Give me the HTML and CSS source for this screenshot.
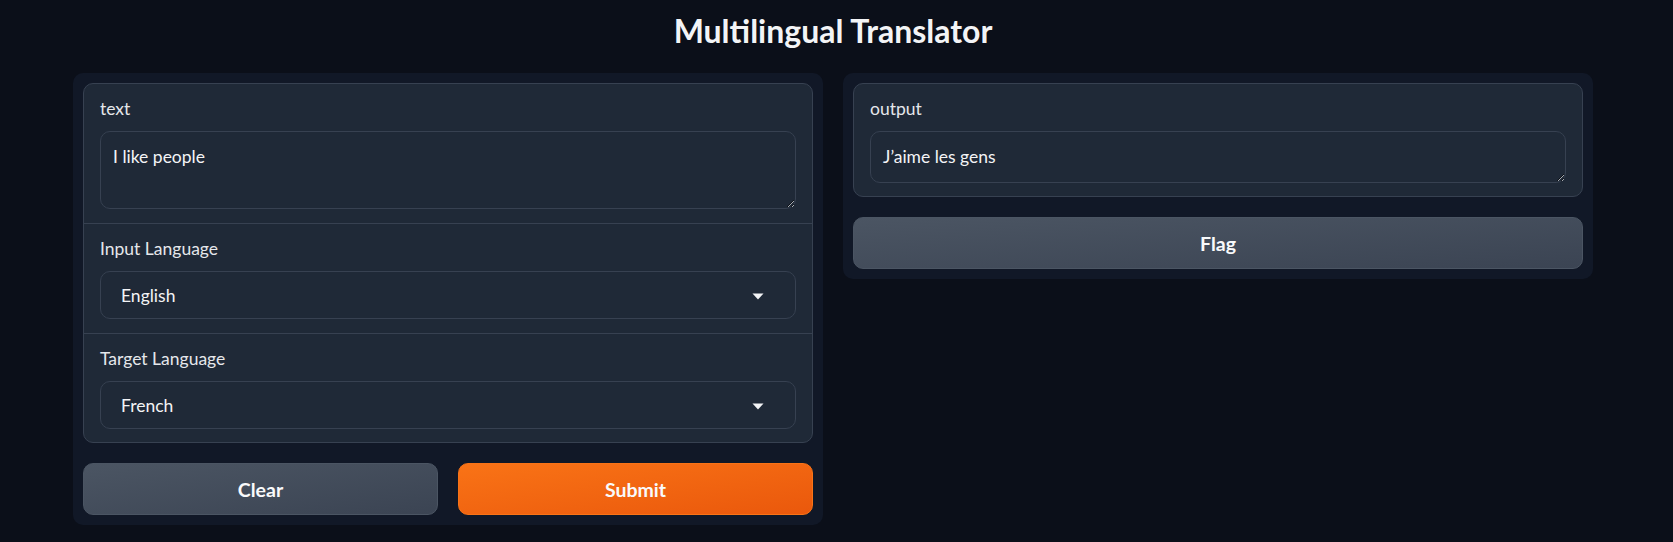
FILE: index.html
```html
<!DOCTYPE html>
<html lang="en">
<head>
<meta charset="utf-8">
<title>Multilingual Translator</title>
<link rel="stylesheet" href="styles.css">
</head>
<body>
<div class="app">
  <h1 class="title">Multilingual Translator</h1>
  <div class="row">
    <div class="panel">
      <div class="form">
        <div class="section">
          <label class="label" for="t-in">text</label>
          <textarea id="t-in" class="textbox tall">I like people</textarea>
        </div>
        <div class="section">
          <span class="label">Input Language</span>
          <div class="dropdown">
            <span class="dd-value">English</span>
            <svg class="dd-arrow" width="12" height="7" viewBox="0 0 12 7"><path d="M0.5 0.5 L11.5 0.5 L6 6.5 Z" fill="#f3f4f6"/></svg>
          </div>
        </div>
        <div class="section last">
          <span class="label">Target Language</span>
          <div class="dropdown">
            <span class="dd-value">French</span>
            <svg class="dd-arrow" width="12" height="7" viewBox="0 0 12 7"><path d="M0.5 0.5 L11.5 0.5 L6 6.5 Z" fill="#f3f4f6"/></svg>
          </div>
        </div>
      </div>
      <div class="buttons">
        <button class="btn secondary">Clear</button>
        <button class="btn primary">Submit</button>
      </div>
    </div>
    <div class="panel">
      <div class="form">
        <div class="section last">
          <label class="label" for="t-out">output</label>
          <textarea id="t-out" class="textbox short">J’aime les gens</textarea>
        </div>
      </div>
      <button class="btn secondary">Flag</button>
    </div>
  </div>
</div>
</body>
</html>
```
FILE: styles.css
```css
* { box-sizing: border-box; }
html, body { margin: 0; padding: 0; }
body {
  background: #0b0f19;
  font-family: Lato, "Open Sans", "Noto Sans", sans-serif;
  color: #f3f4f6;
}
.app {
  width: 1520px;
  margin-left: 73px;
}
.title {
  margin: 0;
  padding-top: 13px;
  height: 73px;
  font-size: 32px;
  line-height: 36px;
  font-weight: 700;
  text-align: center;
  color: #f3f4f6;
}
.row {
  display: flex;
  gap: 20px;
  align-items: flex-start;
}
.panel {
  flex: 1;
  background: #111827;
  border-radius: 10px;
  padding: 10px;
  display: flex;
  flex-direction: column;
  gap: 20px;
}
.form {
  background: #1f2937;
  border: 1px solid #374151;
  border-radius: 10px;
  overflow: hidden;
}
.section {
  padding: 14px 16px 14px;
  border-top: 1px solid #374151;
}
.section:first-child { border-top: none; }
.section.last { padding-bottom: 13px; }
.label {
  display: block;
  font-size: 17.5px;
  line-height: 21px;
  height: 21px;
  margin-bottom: 12px;
  color: #e5e7eb;
}
.textbox {
  display: block;
  width: 100%;
  margin: 0;
  background: #1f2937;
  border: 1px solid #374151;
  border-radius: 10px;
  padding: 14px 12px;
  font-family: inherit;
  font-size: 17.5px;
  line-height: 21px;
  color: #f3f4f6;
  resize: vertical;
  outline: none;
  color-scheme: dark;
}
.textbox.tall { height: 78px; }
.textbox.short { height: 52px; }
.dropdown {
  height: 48px;
  border: 1px solid #374151;
  border-radius: 10px;
  background: #1f2937;
  display: flex;
  align-items: center;
  justify-content: space-between;
  padding: 0 31px 0 20px;
}
.dd-value {
  font-size: 17.5px;
  line-height: 21px;
  color: #f3f4f6;
}
.dd-arrow { display: block; margin-top: 2px; }
.buttons {
  display: flex;
  gap: 20px;
}
.btn {
  flex: 1;
  height: 52px;
  border-radius: 10px;
  font-family: inherit;
  font-size: 19.5px;
  font-weight: 700;
  color: #f9fafb;
  cursor: pointer;
}
.btn.secondary {
  background: linear-gradient(to bottom right, #4b5563, #3b4453);
  border: 1px solid #4b5563;
}
.btn.primary {
  background: linear-gradient(to bottom right, #f97316, #ea580c);
  border: 1px solid #f97316;
}
.panel > .btn { flex: none; width: 100%; }
```
